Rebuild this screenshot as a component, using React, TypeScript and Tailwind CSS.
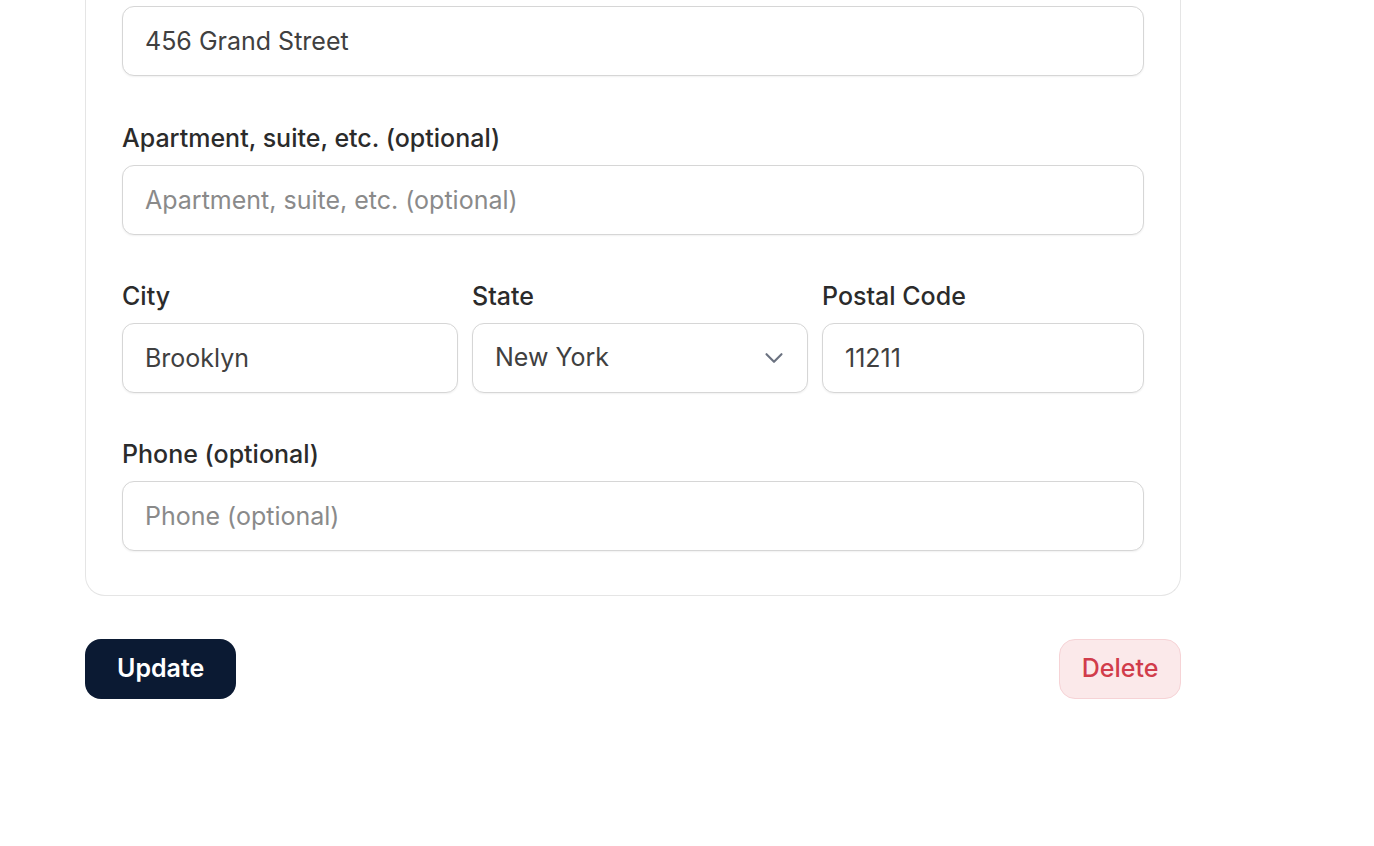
import { ChevronDown } from 'lucide-react'

const inputCls =
  'w-full h-[70px] rounded-[12px] border border-[#d6d6d6] bg-white px-[22px] text-[25px] text-[#404040] placeholder:text-[#8a8a8a] shadow-[0_1px_2px_rgba(0,0,0,0.06)] outline-none'

function Label({ children }: { children: React.ReactNode }) {
  return (
    <label className="block mb-3 text-[25px] leading-[30px] font-medium text-[#2b2b2b]">
      {children}
    </label>
  )
}

export default function App() {
  return (
    <div className="min-h-screen bg-white font-['Inter',sans-serif]">
      <div className="w-[1096px] ml-[85px]">
        <div className="border border-t-0 border-[#e5e5e5] rounded-b-[20px] px-9 pt-[6px] pb-[44px] flex flex-col gap-[46px]">
          <input className={inputCls + ' mb-px'} defaultValue="456 Grand Street" />

          <div>
            <Label>Apartment, suite, etc. (optional)</Label>
            <input className={inputCls} placeholder="Apartment, suite, etc. (optional)" />
          </div>

          <div className="grid grid-cols-[336px_336px_1fr] gap-[14px]">
            <div>
              <Label>City</Label>
              <input className={inputCls} defaultValue="Brooklyn" />
            </div>
            <div>
              <Label>State</Label>
              <div className="relative">
                <select
                  className={inputCls + ' appearance-none pr-12'}
                  defaultValue="NY"
                >
                  <option value="NY">New York</option>
                  <option value="NJ">New Jersey</option>
                </select>
                <ChevronDown
                  size={30}
                  strokeWidth={1.7}
                  className="pointer-events-none absolute right-[19px] top-1/2 -translate-y-1/2 text-[#6b7280]"
                />
              </div>
            </div>
            <div>
              <Label>Postal Code</Label>
              <input className={inputCls} defaultValue="11211" />
            </div>
          </div>

          <div>
            <Label>Phone (optional)</Label>
            <input className={inputCls} placeholder="Phone (optional)" />
          </div>
        </div>

        <div className="mt-[43px] flex items-center justify-between">
          <button className="h-[60px] px-8 rounded-[16px] bg-[#0b1a33] text-white text-[25px] font-semibold">
            Update
          </button>
          <button className="h-[60px] px-[21.5px] rounded-[16px] bg-[#fbe9ea] border border-[#f6d3d6] text-[#d13c4b] text-[25px] font-medium">
            Delete
          </button>
        </div>
      </div>
    </div>
  )
}
